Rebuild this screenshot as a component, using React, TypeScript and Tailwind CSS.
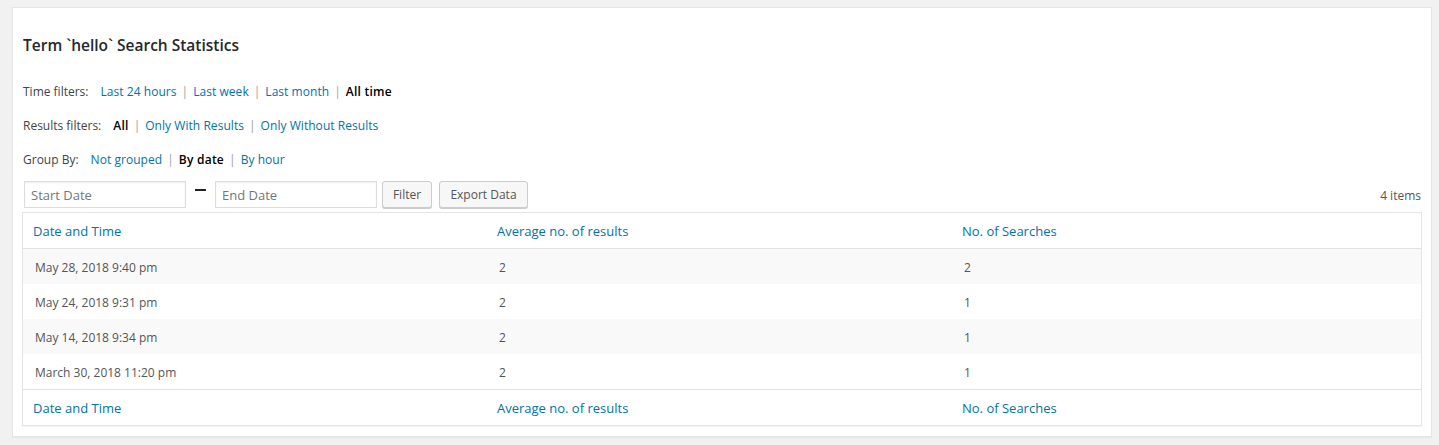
import React from "react";

const TIME_FILTERS = ["Last 24 hours", "Last week", "Last month", "All time"];
const RESULT_FILTERS = ["All", "Only With Results", "Only Without Results"];
const GROUP_BY = ["Not grouped", "By date", "By hour"];

const ROWS = [
  ["May 28, 2018 9:40 pm", "2", "2"],
  ["May 24, 2018 9:31 pm", "2", "1"],
  ["May 14, 2018 9:34 pm", "2", "1"],
  ["March 30, 2018 11:20 pm", "2", "1"],
];

const COLUMNS = ["Date and Time", "Average no. of results", "No. of Searches"];

function FilterRow({ label, items, active }: { label: string; items: string[]; active: number }) {
  return (
    <div className="flex items-center text-[12px] leading-[20px]">
      <span className="mr-[12px] text-[#444]">{label}</span>
      {items.map((item, i) => (
        <span key={item} className="flex items-center">
          {i > 0 && <span className="mx-[5px] text-[#a0a0a0]">|</span>}
          {i === active ? (
            <span className="font-semibold tracking-[0.02em] text-black">{item}</span>
          ) : (
            <a href="#" className="tracking-[0.004em] text-[#0073aa]">
              {item}
            </a>
          )}
        </span>
      ))}
    </div>
  );
}

function HeaderRow({ top }: { top?: boolean }) {
  return (
    <div
      className={
        top
          ? "grid h-[36px] grid-cols-[464px_465px_1fr] items-center border-b border-[#e1e1e1] pt-[2px]"
          : "grid h-[36px] grid-cols-[464px_465px_1fr] items-center border-t border-[#e1e1e1] pt-[2px]"
      }
    >
      {COLUMNS.map((col) => (
        <div key={col} className="pl-[10px] text-[13px] text-[#0073aa]">
          {col}
        </div>
      ))}
    </div>
  );
}

export default function App() {
  return (
    <div
      className="min-h-[445px] bg-[#f1f1f1] pl-[12px] pt-[7px]"
      style={{ fontFamily: '"Open Sans", "Noto Sans", sans-serif' }}
    >
      <div className="flex h-[430px] w-[1420px] flex-col border border-[#e5e5e5] bg-white px-[9px] shadow-[0_1px_1px_rgba(0,0,0,0.04)]">
        <h2 className="pl-[1px] pt-[26px] text-[15.5px] font-semibold leading-[22px] text-[#23282d]">
          Term `hello` Search Statistics
        </h2>

        <div className="mt-[26px] flex flex-col gap-[14px] pl-[1px]">
          <FilterRow label="Time filters:" items={TIME_FILTERS} active={3} />
          <FilterRow label="Results filters:" items={RESULT_FILTERS} active={0} />
          <FilterRow label="Group By:" items={GROUP_BY} active={1} />
        </div>

        <div className="mt-[11px] flex h-[27px] items-center">
          <input
            placeholder="Start Date"
            className="ml-[2px] h-[27px] w-[162px] border border-[#ddd] px-[6px] text-[13px] text-[#333] shadow-[inset_0_1px_2px_rgba(0,0,0,0.07)] outline-none placeholder:text-[#72777c]"
          />
          <span className="mx-[9px] mb-[9px] h-[2px] w-[11px] bg-[#222]" />
          <input
            placeholder="End Date"
            className="h-[27px] w-[162px] border border-[#ddd] px-[6px] text-[13px] text-[#333] shadow-[inset_0_1px_2px_rgba(0,0,0,0.07)] outline-none placeholder:text-[#72777c]"
          />
          <button className="ml-[5px] h-[27px] w-[50px] rounded-[3px] border border-[#ccc] bg-[#f7f7f7] text-[12px] text-[#555] shadow-[0_1px_0_#ccc]">
            Filter
          </button>
          <button className="ml-[7px] h-[27px] w-[89px] rounded-[3px] border border-[#ccc] bg-[#f7f7f7] text-[12px] text-[#555] shadow-[0_1px_0_#ccc]">
            Export Data
          </button>
          <span className="ml-auto pr-[1px] pt-[2px] text-[12px] text-[#555]">4 items</span>
        </div>

        <div className="mt-[4px] border border-[#e5e5e5] shadow-[0_1px_1px_rgba(0,0,0,0.04)]">
          <HeaderRow top />
          {ROWS.map((row, i) => (
            <div
              key={row[0]}
              className={
                i % 2 === 0
                  ? "grid h-[35px] grid-cols-[464px_465px_1fr] items-center bg-[#f9f9f9] pt-[2px]"
                  : "grid h-[35px] grid-cols-[464px_465px_1fr] items-center bg-white pt-[2px]"
              }
            >
              {row.map((cell, j) => (
                <div key={j} className="pl-[12px] text-[12px] text-[#555]">
                  {cell}
                </div>
              ))}
            </div>
          ))}
          <HeaderRow />
        </div>
      </div>
    </div>
  );
}
